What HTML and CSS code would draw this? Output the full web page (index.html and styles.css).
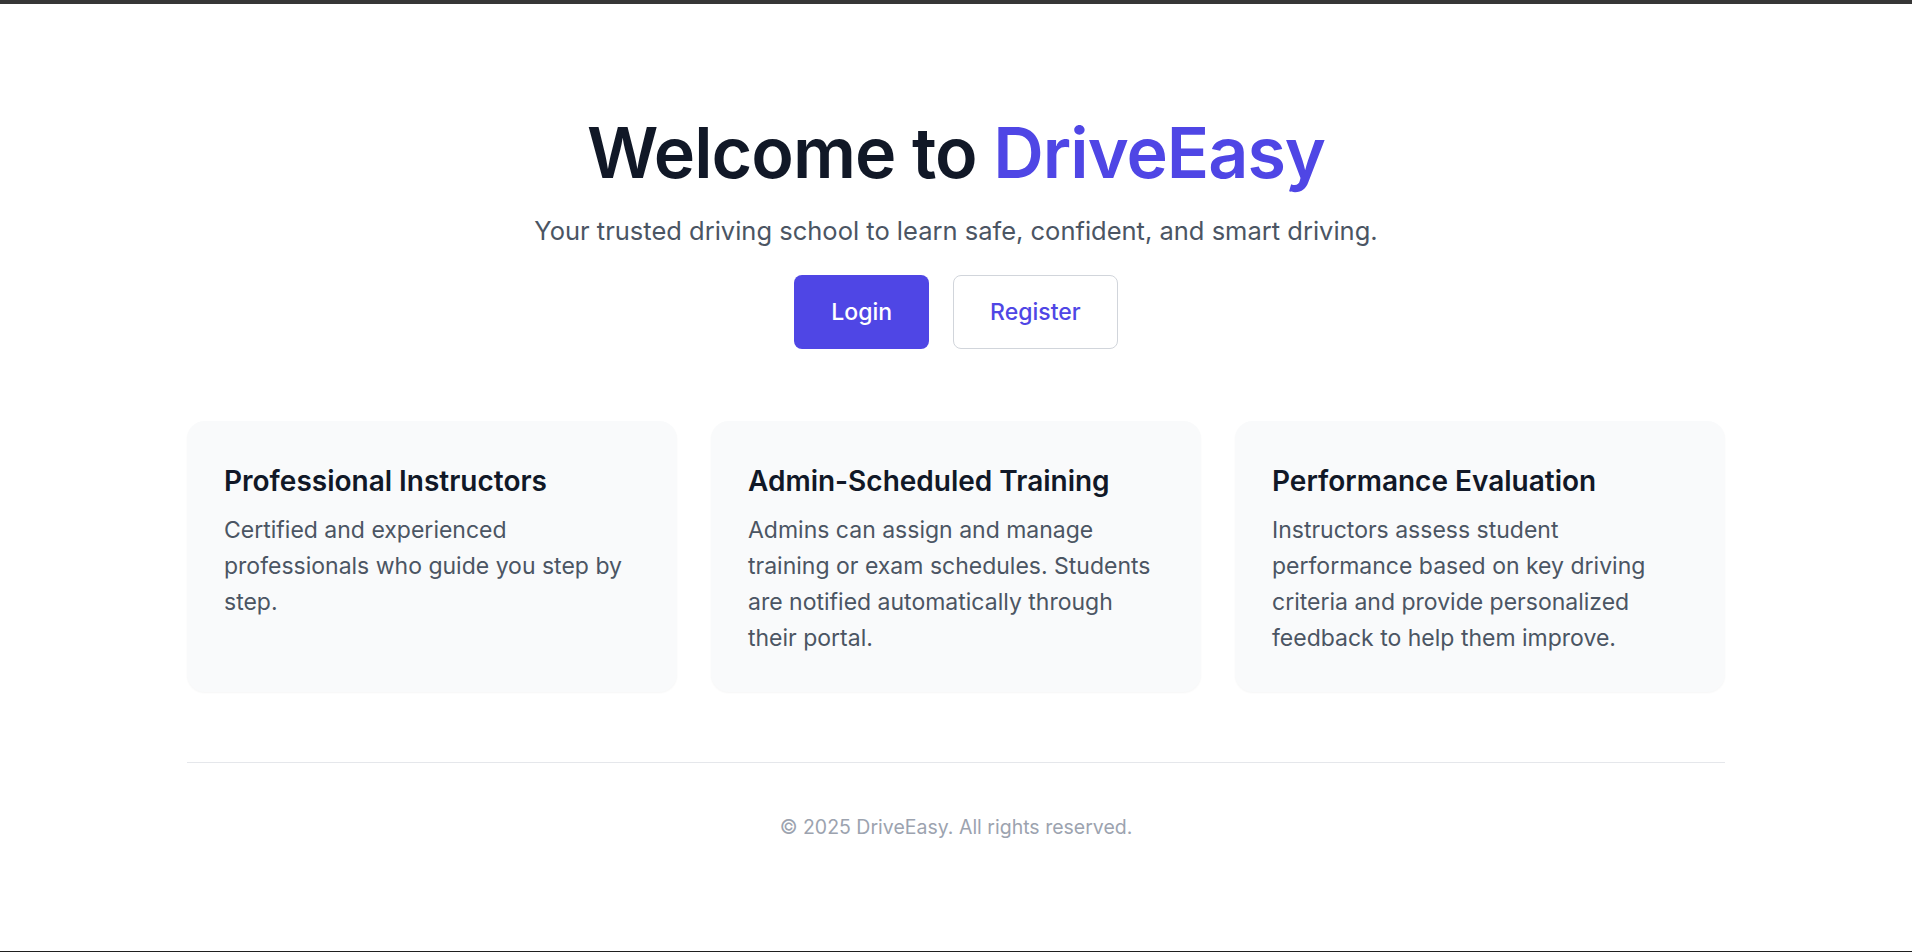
FILE: index.html
```html
<!DOCTYPE html>
<html lang="en">
<head>
<meta charset="utf-8">
<title>DriveEasy</title>
<link rel="stylesheet" href="styles.css">
</head>
<body>
<main class="page">
  <section class="hero">
    <h1 class="hero-title">Welcome to <span class="brand">DriveEasy</span></h1>
    <p class="hero-lead">Your trusted driving school to learn safe, confident, and smart driving.</p>
    <div class="actions">
      <a class="btn btn-primary" href="#">Login</a>
      <a class="btn btn-outline" href="#">Register</a>
    </div>
  </section>

  <section class="features">
    <article class="card">
      <h3 class="card-title">Professional Instructors</h3>
      <p class="card-text">Certified and experienced professionals who guide you step by step.</p>
    </article>
    <article class="card">
      <h3 class="card-title">Admin-Scheduled Training</h3>
      <p class="card-text">Admins can assign and manage training or exam schedules. Students are notified automatically through their portal.</p>
    </article>
    <article class="card">
      <h3 class="card-title">Performance Evaluation</h3>
      <p class="card-text">Instructors assess student performance based on key driving criteria and provide personalized feedback to help them improve.</p>
    </article>
  </section>

  <footer class="footer">
    <p class="footer-text">© 2025 DriveEasy. All rights reserved.</p>
  </footer>
</main>
</body>
</html>
```

FILE: styles.css
```css
* { box-sizing: border-box; }

html, body { margin: 0; padding: 0; }

body {
  min-height: 100vh;
  background: #ffffff;
  border-top: 4px solid #363636;
  border-bottom: 1px solid #1f1f1f;
  font-family: "Inter", "Liberation Sans", sans-serif;
  color: #111827;
}

.page {
  width: 1538px;
  margin: 0 auto;
  padding-top: 109px;
}

.hero {
  display: flex;
  flex-direction: column;
  align-items: center;
  text-align: center;
}

.hero-title {
  margin: 0;
  font-size: 70px;
  line-height: 80px;
  font-weight: 600;
  letter-spacing: -1px;
  color: #111827;
}

.brand { color: #4f46e5; }

.hero-lead {
  margin: 22px 0 0;
  font-size: 25.5px;
  line-height: 32px;
  color: #4b5563;
}

.actions {
  display: flex;
  gap: 24px;
  margin-top: 28px;
}

.btn {
  display: inline-block;
  padding: 20px 37px;
  font-size: 23px;
  line-height: 34px;
  font-weight: 500;
  text-decoration: none;
  border-radius: 8px;
}

.btn-primary {
  background: #4f46e5;
  color: #ffffff;
}

.btn-outline {
  border: 1px solid #d1d5db;
  color: #4f46e5;
  padding: 19px 36px;
}

.features {
  display: grid;
  grid-template-columns: repeat(3, 1fr);
  gap: 34px;
  margin-top: 72px;
}

.card {
  background: #f9fafb;
  border-radius: 18px;
  padding: 41px 37px 36px;
  box-shadow: 0 1px 2px rgba(0, 0, 0, 0.04);
}

.card-title {
  margin: 0;
  font-size: 28px;
  line-height: 38px;
  font-weight: 600;
  color: #111827;
}

.card-text {
  max-width: 405px;
  margin: 12px 0 0;
  font-size: 23px;
  line-height: 36px;
  color: #4b5563;
}

.footer {
  margin-top: 70px;
  border-top: 1px solid #e5e7eb;
  padding-top: 52px;
  text-align: center;
}

.footer-text {
  margin: 0;
  font-size: 19.5px;
  line-height: 24px;
  color: #9ca3af;
}
```
